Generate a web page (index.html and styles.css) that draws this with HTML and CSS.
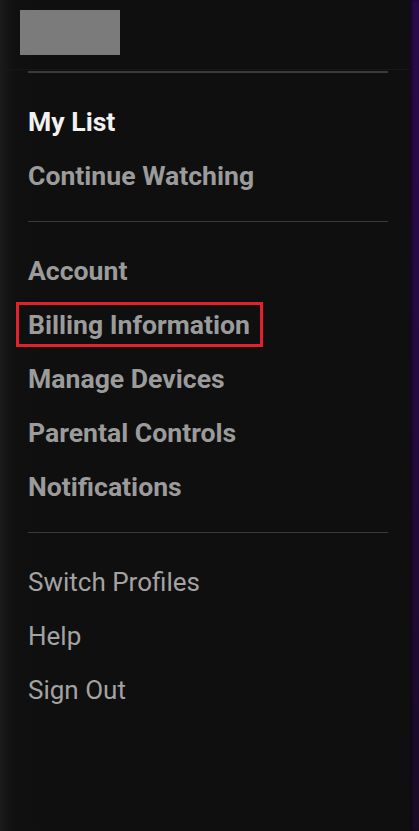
FILE: index.html
```html
<!DOCTYPE html>
<html lang="en">
<head>
<meta charset="utf-8">
<title>Menu</title>
<link rel="stylesheet" href="styles.css">
</head>
<body>
<div class="screen">
  <aside class="panel">
    <header class="panel-header">
      <div class="logo-box"></div>
    </header>
    <nav class="menu">
      <hr class="divider divider-top">
      <ul class="section">
        <li class="item item-bold item-active">My List</li>
        <li class="item item-bold">Continue Watching</li>
      </ul>
      <hr class="divider">
      <ul class="section">
        <li class="item item-bold">Account</li>
        <li class="item item-bold item-marked">Billing Information<span class="highlight"></span></li>
        <li class="item item-bold">Manage Devices</li>
        <li class="item item-bold">Parental Controls</li>
        <li class="item item-bold">Notifications</li>
      </ul>
      <hr class="divider">
      <ul class="section">
        <li class="item item-light">Switch Profiles</li>
        <li class="item item-light">Help</li>
        <li class="item item-light">Sign Out</li>
      </ul>
    </nav>
  </aside>
  <div class="edge"></div>
</div>
</body>
</html>
```

FILE: styles.css
```css
html, body {
  margin: 0;
  padding: 0;
  background: #0f0f0f;
}

body {
  font-family: Roboto, "Liberation Sans", sans-serif;
}

.screen {
  display: flex;
  width: 419px;
  height: 831px;
  overflow: hidden;
}

.panel {
  width: 410px;
  flex: none;
  background: linear-gradient(to right, #1b1b1b 0px, #141414 8px, #101010 16px, #0f0f0f 40px);
  display: flex;
  flex-direction: column;
}

.edge {
  flex: 1;
  background: linear-gradient(to bottom, #2a0a4c 0%, #240a40 50%, #1a0b26 100%);
  box-shadow: inset 2px 0 3px rgba(0, 0, 0, 0.5);
}

.panel-header {
  height: 59px;
  padding: 10px 0 0 20px;
  border-bottom: 1px solid #171717;
}

.logo-box {
  width: 100px;
  height: 45px;
  background: #7b7b7b;
}

.menu {
  padding: 0 22px 0 28px;
}

.divider {
  border: 0;
  margin: 0;
  height: 1px;
  background: #3a3a3a;
}

.divider-top {
  margin-top: 1px;
  height: 2px;
  background: #3b3b3b;
}

.section {
  list-style: none;
  margin: 0;
  padding: 21px 0 19px;
}

.item {
  height: 54px;
  line-height: 56px;
  font-size: 26.6px;
  white-space: nowrap;
}

.item-bold {
  font-weight: 700;
  color: #9b9b9b;
}

.item-active {
  color: #f2f2f2;
}

.item-light {
  font-weight: 400;
  font-size: 26px;
  color: #a3a3a3;
}

.item-marked {
  position: relative;
}

.highlight {
  position: absolute;
  left: -12px;
  top: 5px;
  width: 241px;
  height: 39px;
  border: 3px solid #e3202b;
}
```
